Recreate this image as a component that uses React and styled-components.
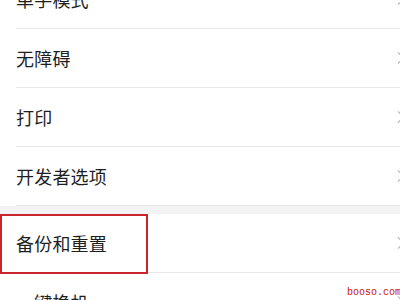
import React from 'react';
import styled, { createGlobalStyle } from 'styled-components';

// colours
const textDark = '#1f1f1f';
const lineGray = '#e8e8e8';
const gapGray = '#f3f3f3';
const arrowGray = '#bdbdbd';
const markRed = '#c8262c';

const GlobalStyle = createGlobalStyle`
  html, body {
    margin: 0;
    padding: 0;
    background: #ffffff;
    overflow: hidden;
  }
  body {
    font-family: "Noto Sans CJK SC", "Noto Sans", sans-serif;
  }
`

const Screen = styled.div`
  position: relative;
  width: 400px;
  height: 300px;
  overflow: hidden;
  background: #ffffff;
`

// list is scrolled so the first row is half hidden
const List = styled.div`
  display: flex;
  flex-direction: column;
  margin-top: -30px;
`

const Group = styled.div`
  display: flex;
  flex-direction: column;
  background: #ffffff;
`

const GroupGap = styled.div`
  height: 8px;
  background: ${gapGray};
`

const Row = styled.div`
  display: flex;
  align-items: center;
  justify-content: space-between;
  height: 58px;
  padding-left: 16px;
  box-sizing: border-box;
`

const Separator = styled.div`
  height: 1px;
  margin-left: 16px;
  background: ${lineGray};
`

const Label = styled.span`
  font-size: 18px;
  color: ${textDark};
  letter-spacing: 0.2px;
  line-height: 1;
`

const Arrow = styled.svg`
  flex: none;
  width: 12px;
  height: 14px;
  margin-right: -8px;
`

const Highlight = styled.div`
  position: absolute;
  left: 0;
  top: 214px;
  width: 148px;
  height: 60px;
  box-sizing: border-box;
  border: 2px solid ${markRed};
  pointer-events: none;
`

const Watermark = styled.div`
  position: absolute;
  right: -1px;
  bottom: 2px;
  font-family: "Liberation Mono", "DejaVu Sans Mono", monospace;
  font-size: 10px;
  line-height: 10px;
  color: #cc1111;
`

function Chevron() {
  return (
    <Arrow viewBox="0 0 12 14">
      <path d="M2 1.5 L8 7 L2 12.5" fill="none" stroke={arrowGray} strokeWidth="1.4" />
    </Arrow>
  );
}

const groups = [
  ['单手模式', '无障碍', '打印', '开发者选项'],
  ['备份和重置', '一键换机'],
];

export default function App() {
  return (
    <Screen>
      <GlobalStyle />
      <List>
        {groups.map((items, gi) => (
          <React.Fragment key={gi}>
            {gi > 0 && <GroupGap />}
            <Group>
              {items.map((name) => (
                <React.Fragment key={name}>
                  <Row>
                    <Label>{name}</Label>
                    <Chevron />
                  </Row>
                  <Separator />
                </React.Fragment>
              ))}
            </Group>
          </React.Fragment>
        ))}
      </List>
      <Highlight />
      <Watermark>booso.com</Watermark>
    </Screen>
  );
}
